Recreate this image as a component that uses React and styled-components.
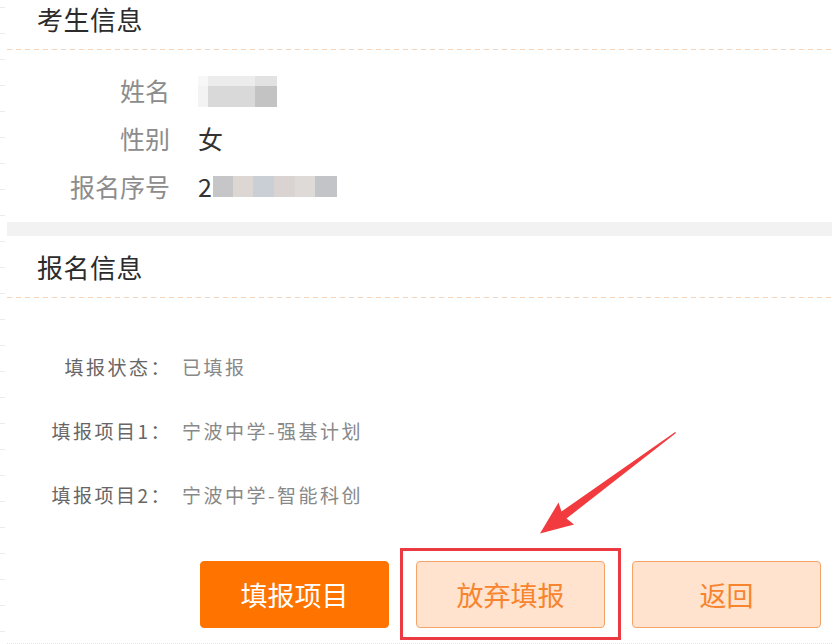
import React from "react";
import styled, { createGlobalStyle } from "styled-components";

const Global = createGlobalStyle`
  html, body { margin: 0; padding: 0; background: #fff; }
  body { font-family: "Noto Sans CJK SC", "Microsoft YaHei", "Noto Sans", sans-serif; overflow: hidden; }
`;

const Viewport = styled.div`
  width: 832px;
  height: 644px;
  overflow: hidden;
  position: relative;
  background:
    repeating-linear-gradient(to bottom, transparent 0 7px, #ebebeb 7px 8px, transparent 8px 26px)
    left top / 5px 100% no-repeat,
    #fff;
`;

const Page = styled.div`
  margin-top: -12px;
  padding-left: 7px;
  position: relative;
`;

const SectionHeader = styled.div`
  height: 62px;
  display: flex;
  align-items: center;
  padding-left: 30px;
  padding-bottom: 1px;
  box-sizing: border-box;
  background: repeating-linear-gradient(to right, #f6d4b8 0 5px, transparent 5px 9px) left bottom / 100% 1px no-repeat;
  font-size: 26px;
  letter-spacing: 0.5px;
  color: #2b2b2b;
`;

const Band = styled.div`
  height: 14px;
  background: #f2f2f2;
`;

const InfoList = styled.div`
  padding: ${(p) => p.$pt}px 0 ${(p) => p.$pb}px;
  display: grid;
  grid-template-columns: ${(p) => p.$labelW}px 1fr;
  column-gap: ${(p) => p.$gap}px;
  grid-auto-rows: ${(p) => p.$rowH}px;
  align-items: center;
`;

const BigLabel = styled.div`
  text-align: right;
  font-size: 25px;
  color: #8c8c8c;
`;

const BigValue = styled.div`
  font-size: 25px;
  color: #333;
  display: flex;
  align-items: center;
`;

const SmallLabel = styled.div`
  text-align: right;
  font-size: 19px;
  letter-spacing: 2.5px;
  color: #666;
`;

const SmallValue = styled.div`
  font-size: 19px;
  letter-spacing: 2.5px;
  color: #888;
`;

const Mosaic = styled.div`
  display: flex;
  flex-direction: column;
  margin-top: ${(p) => p.$mt || 0}px;
`;

const MosaicRow = styled.div`
  display: flex;
`;

const Tile = styled.div`
  width: ${(p) => p.$w}px;
  height: ${(p) => p.$h}px;
  background: ${(p) => p.$c};
`;

const Digit = styled.span`
  font-size: 25px;
  color: #333;
  margin-right: 1px;
`;

const ButtonRow = styled.div`
  margin-top: 35px;
  display: flex;
  justify-content: flex-end;
  gap: 27px;
  padding-right: 11px;
  padding-bottom: 15px;
  border-bottom: 1px dotted #e4e4e4;
`;

const Button = styled.button`
  width: 189px;
  height: 67px;
  border-radius: 4px;
  font-family: inherit;
  font-size: 27px;
  cursor: pointer;
  display: flex;
  align-items: center;
  justify-content: center;
  padding: 0;
  border: 1px solid ${(p) => (p.$primary ? "#ff7300" : "#f5a468")};
  background: ${(p) => (p.$primary ? "#ff7300" : "#ffe3cf")};
  color: ${(p) => (p.$primary ? "#fff" : "#f7842e")};
`;

const Highlight = styled.div`
  position: relative;
  &::after {
    content: "";
    position: absolute;
    left: -16px;
    right: -16px;
    top: -13px;
    bottom: -12px;
    border: 3px solid #ec3a42;
    pointer-events: none;
  }
`;

const ArrowSvg = styled.svg`
  position: absolute;
  left: 530px;
  top: 425px;
  width: 160px;
  height: 120px;
  pointer-events: none;
`;

function Arrow() {
  const pts = [
    [676, 433],
    [566.5, 518.5],
    [574, 524.5],
    [540, 533.5],
    [558.5, 502.5],
    [561.5, 511.5],
    [675.2, 432],
  ]
    .map(([x, y]) => `${x - 530},${y - 425}`)
    .join(" ");
  return (
    <ArrowSvg viewBox="0 0 160 120">
      <polygon points={pts} fill="#f23b3f" />
    </ArrowSvg>
  );
}

export default function App() {
  return (
    <Viewport>
      <Global />
      <Page>
        <SectionHeader>考生信息</SectionHeader>
        <InfoList $pt={16} $pb={12} $labelW={163} $gap={28} $rowH={48}>
          <BigLabel>姓名</BigLabel>
          <BigValue>
            <Mosaic $mt={2}>
              <MosaicRow>
                <Tile $w={10} $h={10} $c="#f7f7f7" />
                <Tile $w={47} $h={10} $c="#ececec" />
                <Tile $w={22} $h={10} $c="#e2e2e2" />
              </MosaicRow>
              <MosaicRow>
                <Tile $w={10} $h={21} $c="#f3f3f3" />
                <Tile $w={47} $h={21} $c="#d9d9d9" />
                <Tile $w={22} $h={21} $c="#c3c3c3" />
              </MosaicRow>
            </Mosaic>
          </BigValue>
          <BigLabel>性别</BigLabel>
          <BigValue>女</BigValue>
          <BigLabel>报名序号</BigLabel>
          <BigValue>
            <Digit>2</Digit>
            <MosaicRow>
              <Tile $w={20} $h={21} $c="#c6c6c8" />
              <Tile $w={20} $h={21} $c="#dcd7d3" />
              <Tile $w={21} $h={21} $c="#c9cfd4" />
              <Tile $w={21} $h={21} $c="#d9d4d1" />
              <Tile $w={20} $h={21} $c="#dddad8" />
              <Tile $w={22} $h={21} $c="#c3c4c8" />
            </MosaicRow>
          </BigValue>
        </InfoList>
        <Band />
        <SectionHeader>报名信息</SectionHeader>
        <InfoList $pt={36} $pb={0} $labelW={165} $gap={10} $rowH={64}>
          <SmallLabel>填报状态：</SmallLabel>
          <SmallValue>已填报</SmallValue>
          <SmallLabel>填报项目1：</SmallLabel>
          <SmallValue>宁波中学-强基计划</SmallValue>
          <SmallLabel>填报项目2：</SmallLabel>
          <SmallValue>宁波中学-智能科创</SmallValue>
        </InfoList>
        <ButtonRow>
          <Button $primary>填报项目</Button>
          <Highlight>
            <Button>放弃填报</Button>
          </Highlight>
          <Button>返回</Button>
        </ButtonRow>
      </Page>
      <Arrow />
    </Viewport>
  );
}
